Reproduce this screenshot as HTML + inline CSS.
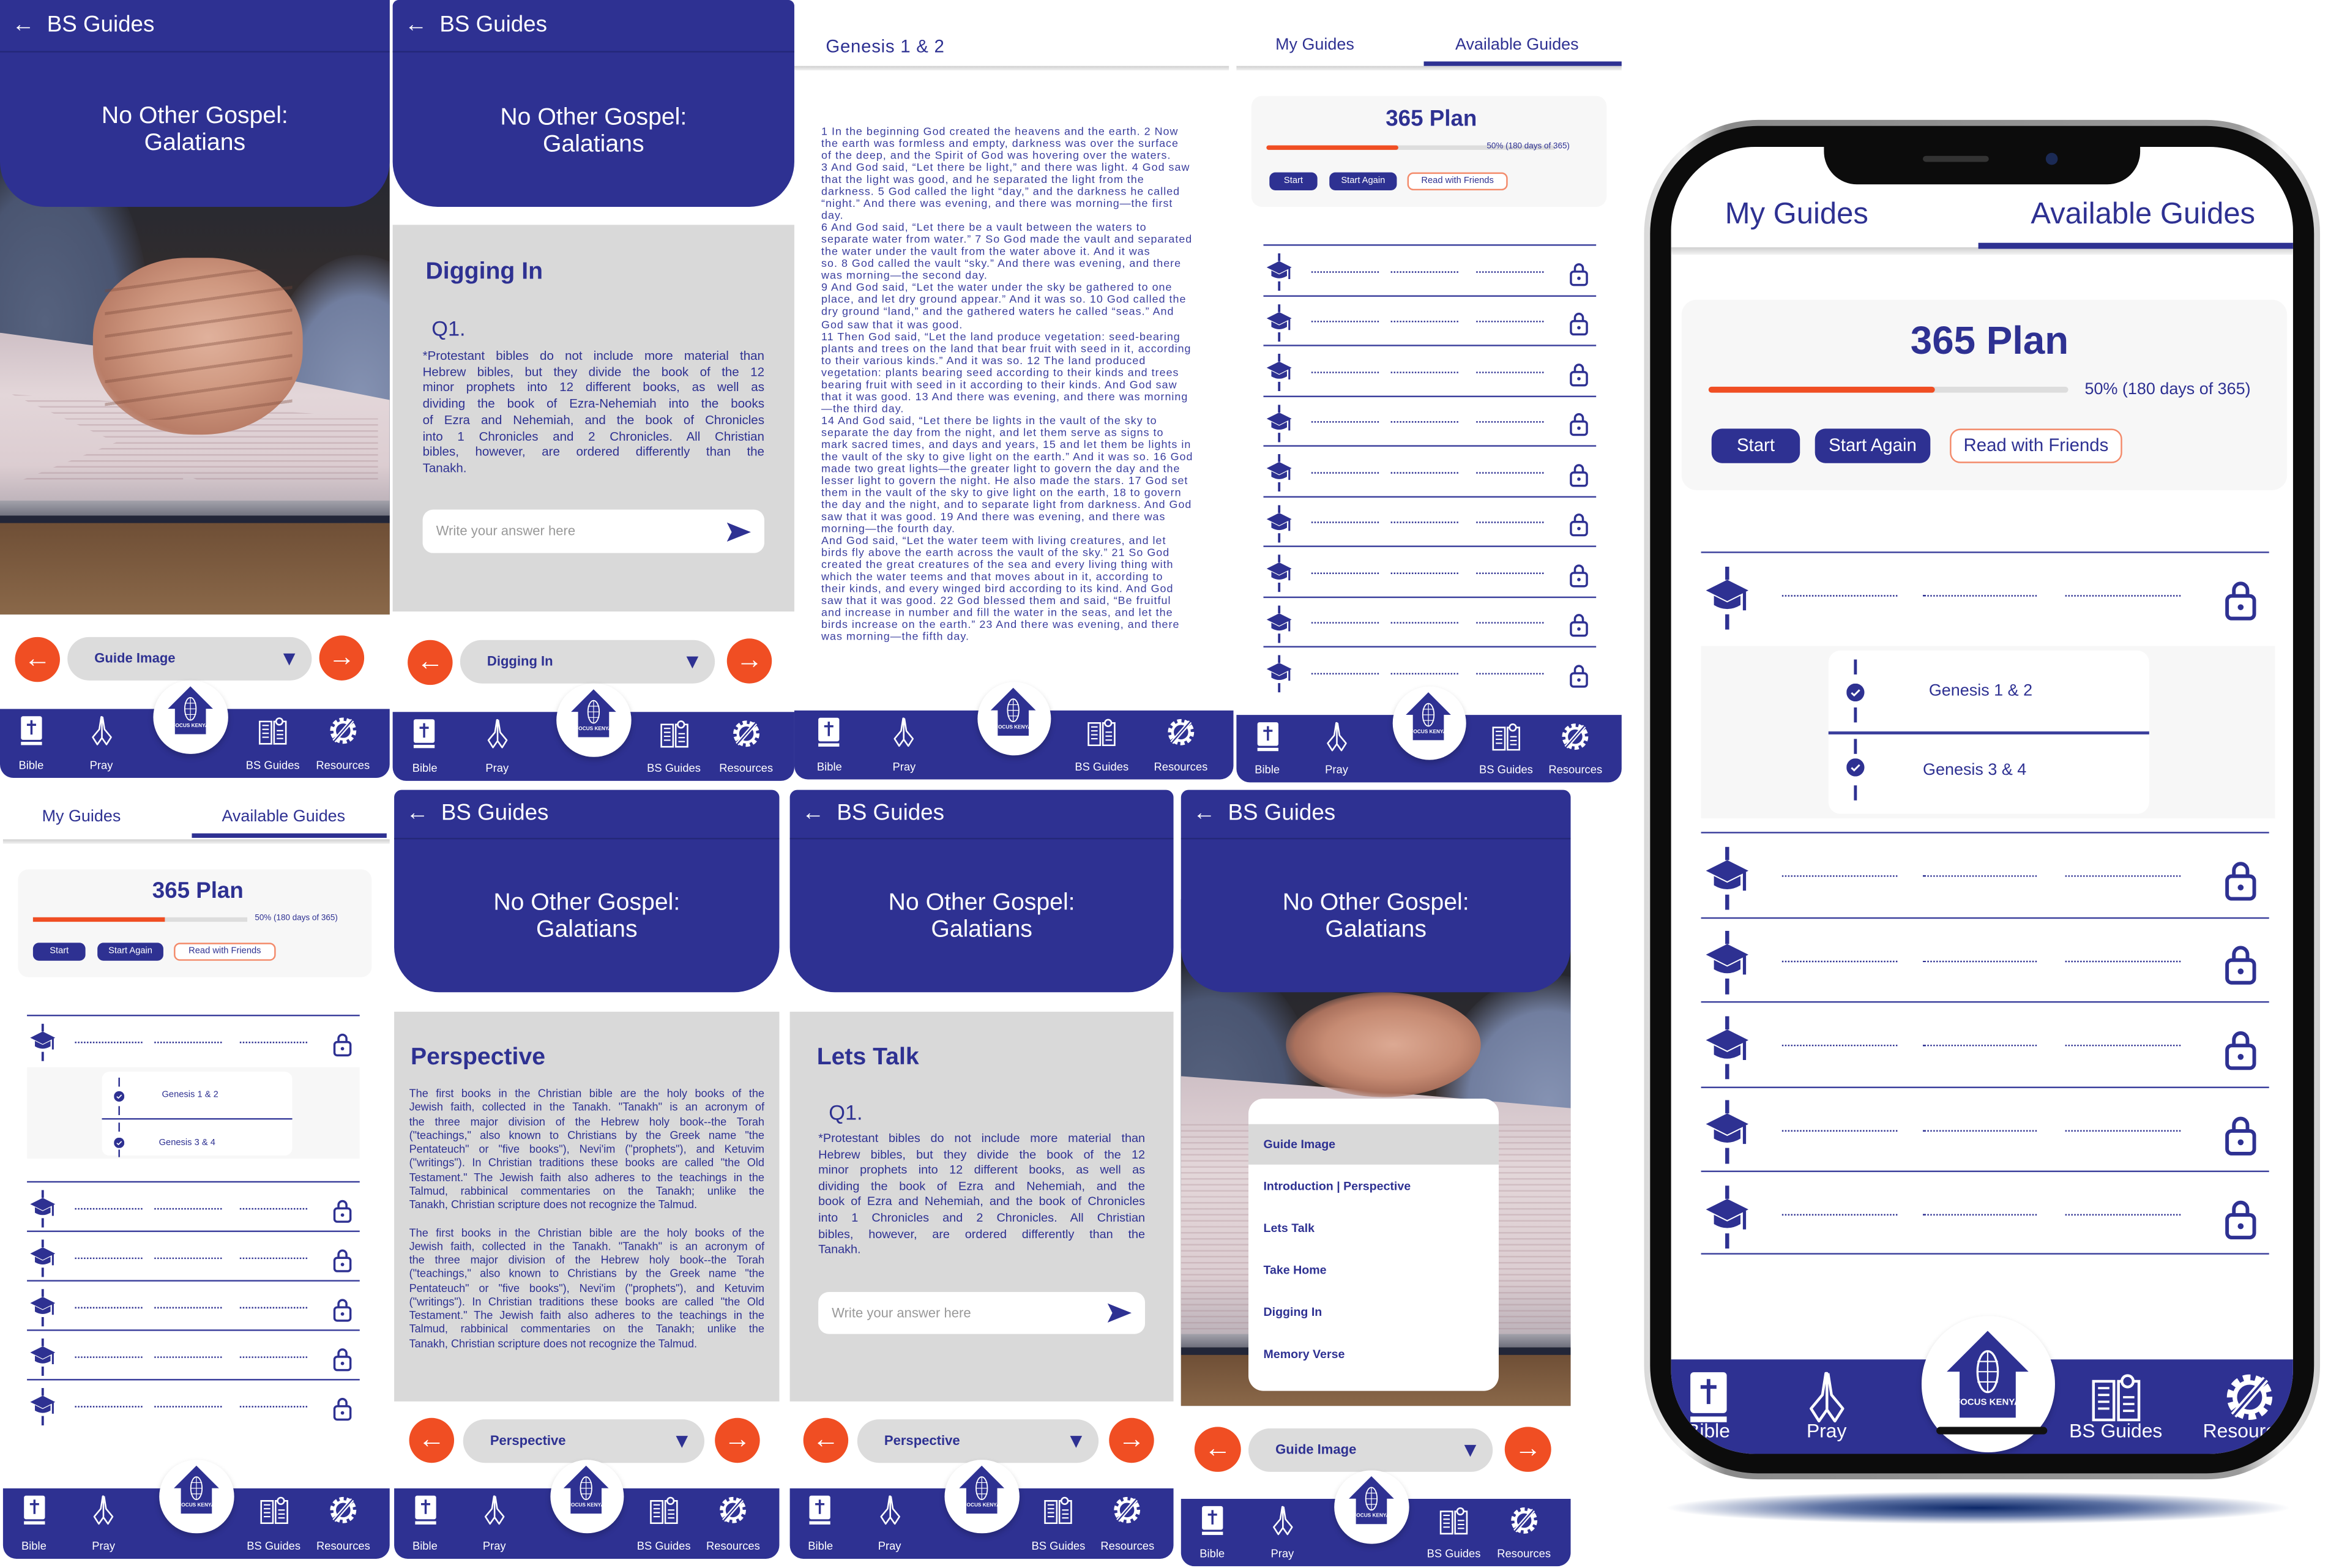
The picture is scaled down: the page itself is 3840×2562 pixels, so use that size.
<!DOCTYPE html>
<html><head><meta charset="utf-8">
<style>
*{margin:0;padding:0;box-sizing:border-box}
html,body{width:3840px;height:2560px;overflow:hidden;background:#fff}
#root{position:absolute;left:0;top:0;width:1568px;height:1046px;transform:scale(2.44898);transform-origin:0 0;font-family:"Liberation Sans",sans-serif;color:#2e3192}
.a{position:absolute}
.hdr{position:absolute;background:#2e3192;border-radius:0 0 30px 30px;color:#fff;overflow:hidden}
.bar{height:35px;border-bottom:1.5px solid #242879;font-size:15px;line-height:34px;padding-left:8px;white-space:nowrap}
.ttl{position:absolute;left:0;right:0;text-align:center;font-size:16px;line-height:18px}
.gp{position:absolute;background:#d9d9d9}
.h2{position:absolute;font-weight:bold;font-size:16px}
.par{position:absolute;color:#2e3192}
.par b{display:block;font-weight:normal;text-align:justify;text-align-last:justify;white-space:normal}
.par b.l{text-align-last:left}
.inp{position:absolute;background:#fff;border-radius:7px;color:#999;font-size:9px;padding-left:9px}
.inp svg{position:absolute;right:9px;top:50%;transform:translateY(-50%)}
.ab{position:absolute;width:30px;height:30px;border-radius:50%;background:#f04e23;color:#fff;font-size:18px;line-height:28px;text-align:center}
.pill{position:absolute;height:29px;border-radius:15px;background:#dcdcdc;font-weight:bold;font-size:9px;line-height:29px;padding-left:18px}
.pill i{position:absolute;right:11px;top:11px;width:0;height:0;border-left:4.5px solid transparent;border-right:4.5px solid transparent;border-top:8px solid #2e3192}
.nav{position:absolute;background:#2e3192;border-radius:0 0 9px 9px;color:#fff}
.ni{position:absolute;top:0;height:100%;transform:translateX(-50%);text-align:center;white-space:nowrap}
.ni svg{display:block;margin:0.5em auto 0;width:2.8em;height:2.8em}
.ni span{position:absolute;left:50%;transform:translateX(-50%);bottom:0.6em;white-space:nowrap}
.hm{position:absolute;width:6.6em;height:6.6em;border-radius:50%;background:#fff;top:-2.6em;transform:translateX(-50%);box-shadow:0 2px 4px rgba(0,0,0,.2)}
.hm svg{position:absolute;left:12%;top:6%;width:76%;height:76%}
.tab{position:absolute;white-space:nowrap}
.card{position:absolute;background:#f7f7f7;border-radius:7px}
.btn{position:absolute;background:#2e3192;color:#fff;border-radius:4px;text-align:center;white-space:nowrap}
.btno{position:absolute;border:1px solid #f38a6a;color:#2e3192;border-radius:4px;text-align:center;white-space:nowrap;background:#fff}
.row{position:absolute;height:3.35em;border-top:1px solid #3b3f9c}
.row .cap{position:absolute;left:0.2em;top:0.5em;width:1.7em;height:2.5em}
.row .d{position:absolute;top:1.65em;width:4.5em;border-top:1px dotted #2e3192}
.row .lk{position:absolute;right:0.5em;top:1.05em;width:1.3em;height:1.6em}
.photo{position:absolute;overflow:hidden;background:#3a2f2a}
.photo div{position:absolute}
.gen{position:absolute;font-size:7.3px;line-height:8.03px;letter-spacing:0.42px;color:#3a3e9e;white-space:nowrap}
</style></head><body>
<svg width="0" height="0" style="position:absolute">
<defs>
<symbol id="bible" viewBox="0 0 20 24"><rect x="2" y="1" width="16" height="18" rx="1.5" fill="#fff"/><rect x="2" y="20.5" width="16" height="2.5" fill="#fff"/><path d="M10 4v11M6.5 7.5h7" stroke="#2e3192" stroke-width="1.6" fill="none"/></symbol>
<symbol id="pray" viewBox="0 0 20 24"><path d="M9.5 1.5L8 11 3 17l3.5 5.5 3.5-5V1.5zM10.5 1.5L12 11l5 6-3.5 5.5-3.5-5" stroke="#fff" stroke-width="1.2" fill="none" stroke-linejoin="round"/></symbol>
<symbol id="bookic" viewBox="0 0 22 24"><path d="M1 5h9v17H1zM12 5h9v17h-9z" stroke="#fff" stroke-width="1.2" fill="none"/><path d="M3 8h5M3 11h5M3 14h5M3 17h5M14 12h5M14 15h5M14 18h5" stroke="#fff" stroke-width="1"/><circle cx="16" cy="5" r="2.5" stroke="#fff" fill="#2e3192" stroke-width="1.2"/></symbol>
<symbol id="gear" viewBox="0 0 24 24"><circle cx="12" cy="12" r="8" stroke="#fff" stroke-width="4" fill="none" stroke-dasharray="3 2"/><circle cx="12" cy="12" r="6.5" stroke="#fff" stroke-width="2" fill="none"/><path d="M5 20L19 4" stroke="#fff" stroke-width="3"/><path d="M5 20L19 4" stroke="#2e3192" stroke-width="1"/></symbol>
<symbol id="home" viewBox="0 0 40 40"><path d="M20 2L4 18h5v18h22V18h5z" fill="#2e3192"/><ellipse cx="20" cy="18" rx="4" ry="8" fill="none" stroke="#fff" stroke-width="0.8"/><path d="M16 14h8M16 18h8M16 22h8M20 10v16" stroke="#fff" stroke-width="0.5"/><text x="20" y="31" font-size="3.6" fill="#fff" text-anchor="middle" font-family="Liberation Sans" font-weight="bold">FOCUS KENYA</text></symbol>
<symbol id="cap" viewBox="0 0 16 24"><path d="M8 0v5M8 18v6" stroke="#2e3192" stroke-width="1.5"/><path d="M0 9l8-4 8 4-8 4z" fill="#2e3192"/><path d="M3 11v3.5q5 3 10 0V11l-5 2.5z" fill="#2e3192"/><path d="M14.5 9.5v7" stroke="#2e3192" stroke-width="1.2"/></symbol>
<symbol id="lock" viewBox="0 0 14 18"><rect x="1" y="7" width="12" height="10" rx="2" stroke="#2e3192" stroke-width="1.6" fill="none"/><path d="M4 7V4.5a3 3 0 0 1 6 0V7" stroke="#2e3192" stroke-width="1.6" fill="none"/><circle cx="7" cy="12" r="1.3" fill="#2e3192"/></symbol>
<symbol id="chk" viewBox="0 0 10 10"><circle cx="5" cy="5" r="5" fill="#2e3192"/><path d="M2.8 5.2l1.5 1.4 3-3" stroke="#fff" stroke-width="1" fill="none"/></symbol>
<symbol id="send" viewBox="0 0 20 16"><path d="M0 0l20 8-20 8 4-8z" fill="#2e3192"/></symbol>
</defs></svg>

<div id="root">

<!-- ============ SCREEN 1 ============ -->
<div class="photo" style="left:0;top:0;width:260px;height:410px;background:linear-gradient(180deg,#1c2330 0%,#2a2a30 35%,#3d302a 60%,#3d302a 100%)">
 <div style="left:-40px;top:90px;width:140px;height:250px;border-radius:50%;background:radial-gradient(ellipse,#56627e 0%,#4a5571 50%,rgba(60,66,86,0) 72%)"></div>
 <div style="left:175px;top:170px;width:130px;height:190px;border-radius:50%;background:radial-gradient(ellipse,#8592b2 0%,#717e9f 50%,rgba(100,110,140,0) 72%)"></div>
 <div style="left:0;top:222px;width:260px;height:118px;background:linear-gradient(180deg,#cfc0c6 0%,#e3d6d9 35%,#dccdd1 75%,#b8aeb6 100%);clip-path:polygon(0 0,40% 12%,100% 38%,100% 100%,0 100%)"></div>
 <div style="left:0;top:255px;width:260px;height:80px;background:repeating-linear-gradient(180deg,rgba(150,110,120,.25) 0 1px,transparent 1px 4px);clip-path:polygon(3% 10%,47% 20%,47% 85%,3% 85%,53% 20%,97% 30%,97% 85%,53% 85%)"></div>
 <div style="left:0;top:334px;width:260px;height:11px;background:linear-gradient(#a3a2ab,#6e6f7c)"></div>
 <div style="left:0;top:344px;width:260px;height:5px;background:#222638"></div>
 <div style="left:0;top:349px;width:260px;height:61px;background:linear-gradient(180deg,#6f4f36,#8a6849)"></div>
 <div style="left:62px;top:172px;width:140px;height:118px;border-radius:45% 45% 48% 48%;background:radial-gradient(ellipse at 55% 45%,#e0b19c 0%,#cf9880 40%,#b97d67 70%,rgba(150,100,80,0) 100%)"></div>
 <div style="left:70px;top:180px;width:125px;height:100px;background:repeating-linear-gradient(172deg,transparent 0 13px,rgba(120,70,55,.35) 13px 15px)"></div>
</div>
<div class="hdr" style="left:0;top:0;width:260px;height:138px">
 <div class="bar">← &nbsp;BS Guides</div>
 <div class="ttl" style="top:69px">No Other Gospel:<br>Galatians</div>
</div>
<div class="ab" style="left:10px;top:425px">←</div>
<div class="pill" style="left:45px;top:425px;width:163px">Guide Image<i></i></div>
<div class="ab" style="left:213px;top:424px">→</div>
<div class="nav" style="left:0;top:473px;width:260px;height:46px;font-size:7.5px">
 <div class="ni" style="left:8%"><svg><use href="#bible"/></svg><span>Bible</span></div>
 <div class="ni" style="left:26%"><svg><use href="#pray"/></svg><span>Pray</span></div>
 <div class="hm" style="left:49%"><svg><use href="#home"/></svg></div>
 <div class="ni" style="left:70%"><svg><use href="#bookic"/></svg><span>BS Guides</span></div>
 <div class="ni" style="left:88%"><svg><use href="#gear"/></svg><span>Resources</span></div>
</div>

<!-- ============ SCREEN 2 ============ -->
<div class="hdr" style="left:262px;top:0;width:268px;height:138px;border-radius:4px 4px 30px 30px">
 <div class="bar">← &nbsp;BS Guides</div>
 <div class="ttl" style="top:70px">No Other Gospel:<br>Galatians</div>
</div>
<div class="gp" style="left:262px;top:150px;width:268px;height:258px"></div>
<div class="h2" style="left:284px;top:173px">Digging In</div>
<div class="a" style="left:288px;top:211px;font-size:14px">Q1.</div>
<div class="par" style="left:282px;top:232px;width:228px;font-size:8.4px;line-height:10.7px"><b>*Protestant bibles do not include more material than</b><b>Hebrew bibles, but they divide the book of the 12</b><b>minor prophets into 12 different books, as well as</b><b>dividing the book of Ezra-Nehemiah into the books</b><b>of Ezra and Nehemiah, and the book of Chronicles</b><b>into 1 Chronicles and 2 Chronicles. All Christian</b><b>bibles, however, are ordered differently than the</b><b class="l">Tanakh.</b></div>
<div class="inp" style="left:282px;top:340px;width:228px;height:29px;line-height:29px">Write your answer here<svg width="16" height="13"><use href="#send"/></svg></div>
<div class="ab" style="left:272px;top:427px">←</div>
<div class="pill" style="left:307px;top:427px;width:170px">Digging In<i></i></div>
<div class="ab" style="left:485px;top:426px">→</div>
<div class="nav" style="left:262px;top:475px;width:268px;height:46px;font-size:7.5px">
 <div class="ni" style="left:8%"><svg><use href="#bible"/></svg><span>Bible</span></div>
 <div class="ni" style="left:26%"><svg><use href="#pray"/></svg><span>Pray</span></div>
 <div class="hm" style="left:50%"><svg><use href="#home"/></svg></div>
 <div class="ni" style="left:70%"><svg><use href="#bookic"/></svg><span>BS Guides</span></div>
 <div class="ni" style="left:88%"><svg><use href="#gear"/></svg><span>Resources</span></div>
</div>

<!-- ============ SCREEN 3 ============ -->
<div class="a" style="left:551px;top:24px;font-size:12px;letter-spacing:0.3px">Genesis 1 &amp; 2</div>
<div class="a" style="left:530px;top:44px;width:290px;height:3px;background:linear-gradient(#cfcfcf,#f2f2f2)"></div>
<div class="gen" style="left:548px;top:84px">1 In the beginning God created the heavens and the earth. 2 Now<br>the earth was formless and empty, darkness was over the surface<br>of the deep, and the Spirit of God was hovering over the waters.<br>3 And God said, “Let there be light,” and there was light. 4 God saw<br>that the light was good, and he separated the light from the<br>darkness. 5 God called the light “day,” and the darkness he called<br>“night.” And there was evening, and there was morning—the first<br>day.<br>6 And God said, “Let there be a vault between the waters to<br>separate water from water.” 7 So God made the vault and separated<br>the water under the vault from the water above it. And it was<br>so. 8 God called the vault “sky.” And there was evening, and there<br>was morning—the second day.<br>9 And God said, “Let the water under the sky be gathered to one<br>place, and let dry ground appear.” And it was so. 10 God called the<br>dry ground “land,” and the gathered waters he called “seas.” And<br>God saw that it was good.<br>11 Then God said, “Let the land produce vegetation: seed-bearing<br>plants and trees on the land that bear fruit with seed in it, according<br>to their various kinds.” And it was so. 12 The land produced<br>vegetation: plants bearing seed according to their kinds and trees<br>bearing fruit with seed in it according to their kinds. And God saw<br>that it was good. 13 And there was evening, and there was morning<br>—the third day.<br>14 And God said, “Let there be lights in the vault of the sky to<br>separate the day from the night, and let them serve as signs to<br>mark sacred times, and days and years, 15 and let them be lights in<br>the vault of the sky to give light on the earth.” And it was so. 16 God<br>made two great lights—the greater light to govern the day and the<br>lesser light to govern the night. He also made the stars. 17 God set<br>them in the vault of the sky to give light on the earth, 18 to govern<br>the day and the night, and to separate light from darkness. And God<br>saw that it was good. 19 And there was evening, and there was<br>morning—the fourth day.<br>And God said, “Let the water teem with living creatures, and let<br>birds fly above the earth across the vault of the sky.” 21 So God<br>created the great creatures of the sea and every living thing with<br>which the water teems and that moves about in it, according to<br>their kinds, and every winged bird according to its kind. And God<br>saw that it was good. 22 God blessed them and said, “Be fruitful<br>and increase in number and fill the water in the seas, and let the<br>birds increase on the earth.” 23 And there was evening, and there<br>was morning—the fifth day.</div>
<div class="nav" style="left:530px;top:474px;width:293px;height:46px;font-size:7.5px">
 <div class="ni" style="left:8%"><svg><use href="#bible"/></svg><span>Bible</span></div>
 <div class="ni" style="left:25%"><svg><use href="#pray"/></svg><span>Pray</span></div>
 <div class="hm" style="left:50%"><svg><use href="#home"/></svg></div>
 <div class="ni" style="left:70%"><svg><use href="#bookic"/></svg><span>BS Guides</span></div>
 <div class="ni" style="left:88%"><svg><use href="#gear"/></svg><span>Resources</span></div>
</div>

<!-- ============ SCREEN 4 ============ -->
<div class="tab" style="left:851px;top:24px;font-size:11px">My Guides</div>
<div class="tab" style="left:971px;top:24px;font-size:11px">Available Guides</div>
<div class="a" style="left:825px;top:44px;width:257px;height:3px;background:linear-gradient(#cfcfcf,#f2f2f2)"></div>
<div class="a" style="left:950px;top:41px;width:132px;height:3px;background:#2e3192"></div>
<div class="card" style="left:835px;top:64px;width:237px;height:74px"></div>
<div class="a" style="left:835px;top:71px;width:240px;text-align:center;font-size:15px;font-weight:bold">365 Plan</div>
<div class="a" style="left:845px;top:97px;width:193px;height:2.5px;background:#ddd;border-radius:2px"></div>
<div class="a" style="left:845px;top:97px;width:88px;height:2.5px;background:#f04e23;border-radius:2px"></div>
<div class="a" style="left:992px;top:95px;font-size:5.5px">50% (180 days of 365)</div>
<div class="btn" style="left:847px;top:115px;width:32px;height:12px;font-size:6px;line-height:12px">Start</div>
<div class="btn" style="left:887px;top:115px;width:45px;height:12px;font-size:6px;line-height:12px">Start Again</div>
<div class="btno" style="left:939px;top:115px;width:67px;height:12px;font-size:6px;line-height:10px">Read with Friends</div>
<div class="a" style="left:843px;top:163px;font-size:10px">
 <div class="row" style="left:0;top:0;width:22.2em"><svg class="cap"><use href="#cap"/></svg><i class="d" style="left:3.2em"></i><i class="d" style="left:8.5em"></i><i class="d" style="left:14.2em"></i><svg class="lk"><use href="#lock"/></svg></div>
 <div class="row" style="left:0;top:3.35em;width:22.2em"><svg class="cap"><use href="#cap"/></svg><i class="d" style="left:3.2em"></i><i class="d" style="left:8.5em"></i><i class="d" style="left:14.2em"></i><svg class="lk"><use href="#lock"/></svg></div>
 <div class="row" style="left:0;top:6.7em;width:22.2em"><svg class="cap"><use href="#cap"/></svg><i class="d" style="left:3.2em"></i><i class="d" style="left:8.5em"></i><i class="d" style="left:14.2em"></i><svg class="lk"><use href="#lock"/></svg></div>
 <div class="row" style="left:0;top:10.05em;width:22.2em"><svg class="cap"><use href="#cap"/></svg><i class="d" style="left:3.2em"></i><i class="d" style="left:8.5em"></i><i class="d" style="left:14.2em"></i><svg class="lk"><use href="#lock"/></svg></div>
 <div class="row" style="left:0;top:13.4em;width:22.2em"><svg class="cap"><use href="#cap"/></svg><i class="d" style="left:3.2em"></i><i class="d" style="left:8.5em"></i><i class="d" style="left:14.2em"></i><svg class="lk"><use href="#lock"/></svg></div>
 <div class="row" style="left:0;top:16.75em;width:22.2em"><svg class="cap"><use href="#cap"/></svg><i class="d" style="left:3.2em"></i><i class="d" style="left:8.5em"></i><i class="d" style="left:14.2em"></i><svg class="lk"><use href="#lock"/></svg></div>
 <div class="row" style="left:0;top:20.1em;width:22.2em"><svg class="cap"><use href="#cap"/></svg><i class="d" style="left:3.2em"></i><i class="d" style="left:8.5em"></i><i class="d" style="left:14.2em"></i><svg class="lk"><use href="#lock"/></svg></div>
 <div class="row" style="left:0;top:23.45em;width:22.2em"><svg class="cap"><use href="#cap"/></svg><i class="d" style="left:3.2em"></i><i class="d" style="left:8.5em"></i><i class="d" style="left:14.2em"></i><svg class="lk"><use href="#lock"/></svg></div>
 <div class="row" style="left:0;top:26.8em;width:22.2em"><svg class="cap"><use href="#cap"/></svg><i class="d" style="left:3.2em"></i><i class="d" style="left:8.5em"></i><i class="d" style="left:14.2em"></i><svg class="lk"><use href="#lock"/></svg></div>
</div>
<div class="nav" style="left:825px;top:477px;width:257px;height:45px;font-size:7.5px">
 <div class="ni" style="left:8%"><svg><use href="#bible"/></svg><span>Bible</span></div>
 <div class="ni" style="left:26%"><svg><use href="#pray"/></svg><span>Pray</span></div>
 <div class="hm" style="left:50%"><svg><use href="#home"/></svg></div>
 <div class="ni" style="left:70%"><svg><use href="#bookic"/></svg><span>BS Guides</span></div>
 <div class="ni" style="left:88%"><svg><use href="#gear"/></svg><span>Resources</span></div>
</div>

<!-- ============ PHONE ============ -->
<div class="a" style="left:1110px;top:995px;width:420px;height:22px;border-radius:50%;background:radial-gradient(ellipse,#0b2768 0%,rgba(25,55,125,.7) 35%,rgba(255,255,255,0) 70%)"></div>
<div class="a" style="left:1097px;top:80px;width:451px;height:907px;border-radius:76px;background:linear-gradient(90deg,#d8d8d8,#f4f4f4 6%,#8a8a8a 12%,#9a9a9a 88%,#f0f0f0 94%,#cfcfcf)"></div>
<div class="a" style="left:1101px;top:84px;width:443px;height:899px;border-radius:72px;background:#0c0c0c"></div>
<div class="a" style="left:1115px;top:98px;width:415px;height:872px;border-radius:56px;background:#fff;overflow:hidden">
 <div class="tab" style="left:36px;top:34px;font-size:20px">My Guides</div>
 <div class="tab" style="left:240px;top:34px;font-size:20px">Available Guides</div>
 <div class="a" style="left:0;top:67px;width:415px;height:5px;background:linear-gradient(#cfcfcf,#f4f4f4)"></div>
 <div class="a" style="left:205px;top:64px;width:210px;height:4px;background:#2e3192"></div>
 <div class="card" style="left:7px;top:102px;width:404px;height:127px;border-radius:10px"></div>
 <div class="a" style="left:7px;top:114px;width:411px;text-align:center;font-size:26px;font-weight:bold">365 Plan</div>
 <div class="a" style="left:25px;top:160px;width:240px;height:4px;background:#ddd;border-radius:2px"></div>
 <div class="a" style="left:25px;top:160px;width:151px;height:4px;background:#f04e23;border-radius:2px"></div>
 <div class="a" style="left:276px;top:156px;font-size:11px">50% (180 days of 365)</div>
 <div class="btn" style="left:27px;top:188px;width:59px;height:23px;font-size:12px;line-height:23px;border-radius:7px">Start</div>
 <div class="btn" style="left:96px;top:188px;width:77px;height:23px;font-size:12px;line-height:23px;border-radius:7px">Start Again</div>
 <div class="btno" style="left:186px;top:188px;width:115px;height:23px;font-size:12px;line-height:21px;border-radius:7px">Read with Friends</div>
 <div class="a" style="left:20px;top:270px;font-size:17px">
  <div class="row" style="left:0;top:0;width:22.3em"><svg class="cap"><use href="#cap"/></svg><i class="d" style="left:3.2em"></i><i class="d" style="left:8.7em"></i><i class="d" style="left:14.3em"></i><svg class="lk"><use href="#lock"/></svg></div>
 </div>
 <div class="a" style="left:20px;top:333px;width:383px;height:115px;background:#f7f7f7"></div>
 <div class="a" style="left:105px;top:336px;width:214px;height:109px;background:#fff;border-radius:8px"></div>
 <div class="a" style="left:105px;top:390px;width:214px;height:1.5px;background:#3b3f9c"></div>
 <div class="a" style="left:122px;top:342px;width:1.5px;height:10px;background:#2e3192"></div>
 <div class="a" style="left:122px;top:374px;width:1.5px;height:10px;background:#2e3192"></div>
 <div class="a" style="left:122px;top:395px;width:1.5px;height:10px;background:#2e3192"></div>
 <div class="a" style="left:122px;top:426px;width:1.5px;height:10px;background:#2e3192"></div>
 <svg class="a" style="left:117px;top:358px" width="12" height="12"><use href="#chk"/></svg>
 <svg class="a" style="left:117px;top:408px" width="12" height="12"><use href="#chk"/></svg>
 <div class="a" style="left:172px;top:357px;font-size:11px">Genesis 1 &amp; 2</div>
 <div class="a" style="left:168px;top:410px;font-size:11px">Genesis 3 &amp; 4</div>
 <div class="a" style="left:20px;top:457px;font-size:17px">
  <div class="row" style="left:0;top:0;width:22.3em"><svg class="cap"><use href="#cap"/></svg><i class="d" style="left:3.2em"></i><i class="d" style="left:8.7em"></i><i class="d" style="left:14.3em"></i><svg class="lk"><use href="#lock"/></svg></div>
  <div class="row" style="left:0;top:3.33em;width:22.3em"><svg class="cap"><use href="#cap"/></svg><i class="d" style="left:3.2em"></i><i class="d" style="left:8.7em"></i><i class="d" style="left:14.3em"></i><svg class="lk"><use href="#lock"/></svg></div>
  <div class="row" style="left:0;top:6.66em;width:22.3em"><svg class="cap"><use href="#cap"/></svg><i class="d" style="left:3.2em"></i><i class="d" style="left:8.7em"></i><i class="d" style="left:14.3em"></i><svg class="lk"><use href="#lock"/></svg></div>
  <div class="row" style="left:0;top:9.99em;width:22.3em"><svg class="cap"><use href="#cap"/></svg><i class="d" style="left:3.2em"></i><i class="d" style="left:8.7em"></i><i class="d" style="left:14.3em"></i><svg class="lk"><use href="#lock"/></svg></div>
  <div class="row" style="left:0;top:13.3em;width:22.3em;height:3.3em;border-bottom:1px solid #3b3f9c"><svg class="cap"><use href="#cap"/></svg><i class="d" style="left:3.2em"></i><i class="d" style="left:8.7em"></i><i class="d" style="left:14.3em"></i><svg class="lk"><use href="#lock"/></svg></div>
 </div>
 <div class="nav" style="left:0;top:809px;width:415px;height:63px;font-size:13px;border-radius:0">
  <div class="ni" style="left:6%"><svg><use href="#bible"/></svg><span>Bible</span></div>
  <div class="ni" style="left:25%"><svg><use href="#pray"/></svg><span>Pray</span></div>
  <div class="hm" style="left:51%;top:-2.2em;height:7em;width:6.9em"><svg><use href="#home"/></svg></div>
  <div class="ni" style="left:71.5%"><svg><use href="#bookic"/></svg><span>BS Guides</span></div>
  <div class="ni" style="left:93%"><svg><use href="#gear"/></svg><span>Resources</span></div>
 </div>
 <div class="a" style="left:177px;top:854px;width:74px;height:5px;border-radius:3px;background:#111"></div>
</div>
<div class="a" style="left:1217px;top:96px;width:211px;height:27px;background:#0c0c0c;border-radius:0 0 22px 22px"></div>
<div class="a" style="left:1283px;top:104px;width:44px;height:4px;border-radius:2px;background:#333"></div>
<div class="a" style="left:1365px;top:102px;width:8px;height:8px;border-radius:50%;background:#1b2a55"></div>

<!-- ============ SCREEN 5 ============ -->
<div class="tab" style="left:28px;top:539px;font-size:11px">My Guides</div>
<div class="tab" style="left:148px;top:539px;font-size:11px">Available Guides</div>
<div class="a" style="left:2px;top:560px;width:258px;height:3px;background:linear-gradient(#cfcfcf,#f2f2f2)"></div>
<div class="a" style="left:128px;top:556px;width:130px;height:3px;background:#2e3192"></div>
<div class="card" style="left:12px;top:580px;width:236px;height:72px"></div>
<div class="a" style="left:12px;top:586px;width:240px;text-align:center;font-size:15px;font-weight:bold">365 Plan</div>
<div class="a" style="left:22px;top:612px;width:143px;height:2.5px;background:#ddd"></div>
<div class="a" style="left:22px;top:612px;width:88px;height:2.5px;background:#f04e23"></div>
<div class="a" style="left:170px;top:610px;font-size:5.5px">50% (180 days of 365)</div>
<div class="btn" style="left:22px;top:629px;width:35px;height:12px;font-size:6px;line-height:12px">Start</div>
<div class="btn" style="left:65px;top:629px;width:44px;height:12px;font-size:6px;line-height:12px">Start Again</div>
<div class="btno" style="left:116px;top:629px;width:68px;height:12px;font-size:6px;line-height:10px">Read with Friends</div>
<div class="a" style="left:18px;top:677px;font-size:10px">
 <div class="row" style="left:0;top:0;width:22.2em"><svg class="cap"><use href="#cap"/></svg><i class="d" style="left:3.2em"></i><i class="d" style="left:8.5em"></i><i class="d" style="left:14.2em"></i><svg class="lk"><use href="#lock"/></svg></div>
</div>
<div class="a" style="left:18px;top:712px;width:222px;height:61px;background:#f7f7f7"></div>
<div class="a" style="left:68px;top:715px;width:127px;height:56px;background:#fff;border-radius:5px"></div>
<div class="a" style="left:68px;top:746px;width:127px;height:1px;background:#3b3f9c"></div>
<svg class="a" style="left:76px;top:728px" width="7" height="7"><use href="#chk"/></svg>
<svg class="a" style="left:76px;top:759px" width="7" height="7"><use href="#chk"/></svg>
<div class="a" style="left:79px;top:719px;width:1px;height:6px;background:#2e3192"></div>
<div class="a" style="left:79px;top:738px;width:1px;height:6px;background:#2e3192"></div>
<div class="a" style="left:79px;top:749px;width:1px;height:6px;background:#2e3192"></div>
<div class="a" style="left:79px;top:767px;width:1px;height:5px;background:#2e3192"></div>
<div class="a" style="left:108px;top:728px;font-size:6px">Genesis 1 &amp; 2</div>
<div class="a" style="left:106px;top:760px;font-size:6px">Genesis 3 &amp; 4</div>
<div class="a" style="left:18px;top:788px;font-size:10px">
 <div class="row" style="left:0;top:0;width:22.2em"><svg class="cap"><use href="#cap"/></svg><i class="d" style="left:3.2em"></i><i class="d" style="left:8.5em"></i><i class="d" style="left:14.2em"></i><svg class="lk"><use href="#lock"/></svg></div>
 <div class="row" style="left:0;top:3.3em;width:22.2em"><svg class="cap"><use href="#cap"/></svg><i class="d" style="left:3.2em"></i><i class="d" style="left:8.5em"></i><i class="d" style="left:14.2em"></i><svg class="lk"><use href="#lock"/></svg></div>
 <div class="row" style="left:0;top:6.6em;width:22.2em"><svg class="cap"><use href="#cap"/></svg><i class="d" style="left:3.2em"></i><i class="d" style="left:8.5em"></i><i class="d" style="left:14.2em"></i><svg class="lk"><use href="#lock"/></svg></div>
 <div class="row" style="left:0;top:9.9em;width:22.2em"><svg class="cap"><use href="#cap"/></svg><i class="d" style="left:3.2em"></i><i class="d" style="left:8.5em"></i><i class="d" style="left:14.2em"></i><svg class="lk"><use href="#lock"/></svg></div>
 <div class="row" style="left:0;top:13.2em;width:22.2em;border-top:1px solid #3b3f9c"><svg class="cap"><use href="#cap"/></svg><i class="d" style="left:3.2em"></i><i class="d" style="left:8.5em"></i><i class="d" style="left:14.2em"></i><svg class="lk"><use href="#lock"/></svg></div>
</div>
<div class="nav" style="left:2px;top:993px;width:258px;height:47px;font-size:7.5px">
 <div class="ni" style="left:8%"><svg><use href="#bible"/></svg><span>Bible</span></div>
 <div class="ni" style="left:26%"><svg><use href="#pray"/></svg><span>Pray</span></div>
 <div class="hm" style="left:50%"><svg><use href="#home"/></svg></div>
 <div class="ni" style="left:70%"><svg><use href="#bookic"/></svg><span>BS Guides</span></div>
 <div class="ni" style="left:88%"><svg><use href="#gear"/></svg><span>Resources</span></div>
</div>

<!-- ============ SCREEN 6 ============ -->
<div class="hdr" style="left:263px;top:527px;width:257px;height:135px;border-radius:5px 5px 30px 30px">
 <div class="bar" style="height:33px;line-height:32px">← &nbsp;BS Guides</div>
 <div class="ttl" style="top:67px">No Other Gospel:<br>Galatians</div>
</div>
<div class="gp" style="left:263px;top:675px;width:257px;height:260px"></div>
<div class="h2" style="left:274px;top:697px">Perspective</div>
<div class="par" style="left:273px;top:725px;width:237px;font-size:7.4px;line-height:9.25px"><b>The first books in the Christian bible are the holy books of the</b><b>Jewish faith, collected in the Tanakh. "Tanakh" is an acronym of</b><b>the three major division of the Hebrew holy book--the Torah</b><b>("teachings," also known to Christians by the Greek name "the</b><b>Pentateuch" or "five books"), Nevi'im ("prophets"), and Ketuvim</b><b>("writings"). In Christian traditions these books are called "the Old</b><b>Testament." The Jewish faith also adheres to the teachings in the</b><b>Talmud, rabbinical commentaries on the Tanakh; unlike the</b><b class="l">Tanakh, Christian scripture does not recognize the Talmud.</b><b class="l">&nbsp;</b><b>The first books in the Christian bible are the holy books of the</b><b>Jewish faith, collected in the Tanakh. "Tanakh" is an acronym of</b><b>the three major division of the Hebrew holy book--the Torah</b><b>("teachings," also known to Christians by the Greek name "the</b><b>Pentateuch" or "five books"), Nevi'im ("prophets"), and Ketuvim</b><b>("writings"). In Christian traditions these books are called "the Old</b><b>Testament." The Jewish faith also adheres to the teachings in the</b><b>Talmud, rabbinical commentaries on the Tanakh; unlike the</b><b class="l">Tanakh, Christian scripture does not recognize the Talmud.</b></div>
<div class="ab" style="left:273px;top:946px">←</div>
<div class="pill" style="left:309px;top:947px;width:161px">Perspective<i></i></div>
<div class="ab" style="left:477px;top:946px">→</div>
<div class="nav" style="left:263px;top:993px;width:257px;height:47px;font-size:7.5px">
 <div class="ni" style="left:8%"><svg><use href="#bible"/></svg><span>Bible</span></div>
 <div class="ni" style="left:26%"><svg><use href="#pray"/></svg><span>Pray</span></div>
 <div class="hm" style="left:50%"><svg><use href="#home"/></svg></div>
 <div class="ni" style="left:70%"><svg><use href="#bookic"/></svg><span>BS Guides</span></div>
 <div class="ni" style="left:88%"><svg><use href="#gear"/></svg><span>Resources</span></div>
</div>

<!-- ============ SCREEN 7 ============ -->
<div class="hdr" style="left:527px;top:527px;width:256px;height:135px;border-radius:5px 5px 30px 30px">
 <div class="bar" style="height:33px;line-height:32px">← &nbsp;BS Guides</div>
 <div class="ttl" style="top:67px">No Other Gospel:<br>Galatians</div>
</div>
<div class="gp" style="left:527px;top:675px;width:256px;height:260px"></div>
<div class="h2" style="left:545px;top:697px">Lets Talk</div>
<div class="a" style="left:553px;top:734px;font-size:14px">Q1.</div>
<div class="par" style="left:546px;top:755px;width:218px;font-size:8.1px;line-height:10.6px"><b>*Protestant bibles do not include more material than</b><b>Hebrew bibles, but they divide the book of the 12</b><b>minor prophets into 12 different books, as well as</b><b>dividing the book of Ezra and Nehemiah, and the</b><b>book of Ezra and Nehemiah, and the book of Chronicles</b><b>into 1 Chronicles and 2 Chronicles. All Christian</b><b>bibles, however, are ordered differently than the</b><b class="l">Tanakh.</b></div>
<div class="inp" style="left:546px;top:862px;width:218px;height:28px;line-height:28px">Write your answer here<svg width="16" height="13"><use href="#send"/></svg></div>
<div class="ab" style="left:536px;top:946px">←</div>
<div class="pill" style="left:572px;top:947px;width:161px">Perspective<i></i></div>
<div class="ab" style="left:740px;top:946px">→</div>
<div class="nav" style="left:527px;top:993px;width:256px;height:47px;font-size:7.5px">
 <div class="ni" style="left:8%"><svg><use href="#bible"/></svg><span>Bible</span></div>
 <div class="ni" style="left:26%"><svg><use href="#pray"/></svg><span>Pray</span></div>
 <div class="hm" style="left:50%"><svg><use href="#home"/></svg></div>
 <div class="ni" style="left:70%"><svg><use href="#bookic"/></svg><span>BS Guides</span></div>
 <div class="ni" style="left:88%"><svg><use href="#gear"/></svg><span>Resources</span></div>
</div>

<!-- ============ SCREEN 8 ============ -->
<div class="photo" style="left:788px;top:600px;width:260px;height:338px;background:linear-gradient(180deg,#1c2330 0%,#2c2a2e 25%,#3d302a 45%)">
 <div style="left:-50px;top:40px;width:140px;height:180px;border-radius:50%;background:radial-gradient(ellipse,#56627e,#4a5571 50%,rgba(60,66,86,0) 72%)"></div>
 <div style="left:170px;top:50px;width:150px;height:170px;border-radius:50%;background:radial-gradient(ellipse,#8592b2,#717e9f 50%,rgba(100,110,140,0) 72%)"></div>
 <div style="left:0;top:118px;width:260px;height:178px;background:linear-gradient(180deg,#cfc0c6 0%,#e3d6d9 35%,#dccdd1 75%,#b8aeb6 100%);clip-path:polygon(0 0,45% 5%,100% 12%,100% 100%,0 100%)"></div>
 <div style="left:0;top:150px;width:260px;height:140px;background:repeating-linear-gradient(180deg,rgba(150,110,120,.22) 0 1px,transparent 1px 4px)"></div>
 <div style="left:0;top:290px;width:260px;height:9px;background:linear-gradient(#a3a2ab,#6e6f7c)"></div>
 <div style="left:0;top:299px;width:260px;height:5px;background:#222638"></div>
 <div style="left:0;top:304px;width:260px;height:34px;background:linear-gradient(180deg,#6f4f36,#8a6849)"></div>
 <div style="left:70px;top:62px;width:130px;height:70px;border-radius:50%;background:radial-gradient(ellipse at 55% 50%,#dca993 0%,#c68b73 45%,#a9705c 65%,rgba(150,100,80,0) 80%)"></div>
</div>
<div class="hdr" style="left:788px;top:527px;width:260px;height:135px;border-radius:5px 5px 30px 30px">
 <div class="bar" style="height:33px;line-height:32px">← &nbsp;BS Guides</div>
 <div class="ttl" style="top:67px">No Other Gospel:<br>Galatians</div>
</div>
<div class="a" style="left:833px;top:733px;width:167px;height:195px;background:#fff;border-radius:10px;font-size:8px;font-weight:bold">
 <div class="a" style="left:0;top:17px;width:167px;height:27px;background:#d9d9d9"></div>
 <div class="a" style="left:10px;top:26px">Guide Image</div>
 <div class="a" style="left:10px;top:54px">Introduction | Perspective</div>
 <div class="a" style="left:10px;top:82px">Lets Talk</div>
 <div class="a" style="left:10px;top:110px">Take Home</div>
 <div class="a" style="left:10px;top:138px">Digging In</div>
 <div class="a" style="left:10px;top:166px">Memory Verse</div>
</div>
<div class="ab" style="left:797px;top:952px;width:31px">←</div>
<div class="pill" style="left:833px;top:953px;width:163px;padding-left:18px">Guide Image<i></i></div>
<div class="ab" style="left:1004px;top:952px;width:31px">→</div>
<div class="nav" style="left:788px;top:1000px;width:260px;height:45px;font-size:7.5px">
 <div class="ni" style="left:8%"><svg><use href="#bible"/></svg><span>Bible</span></div>
 <div class="ni" style="left:26%"><svg><use href="#pray"/></svg><span>Pray</span></div>
 <div class="hm" style="left:49%"><svg><use href="#home"/></svg></div>
 <div class="ni" style="left:70%"><svg><use href="#bookic"/></svg><span>BS Guides</span></div>
 <div class="ni" style="left:88%"><svg><use href="#gear"/></svg><span>Resources</span></div>
</div>

</div>
</body></html>
